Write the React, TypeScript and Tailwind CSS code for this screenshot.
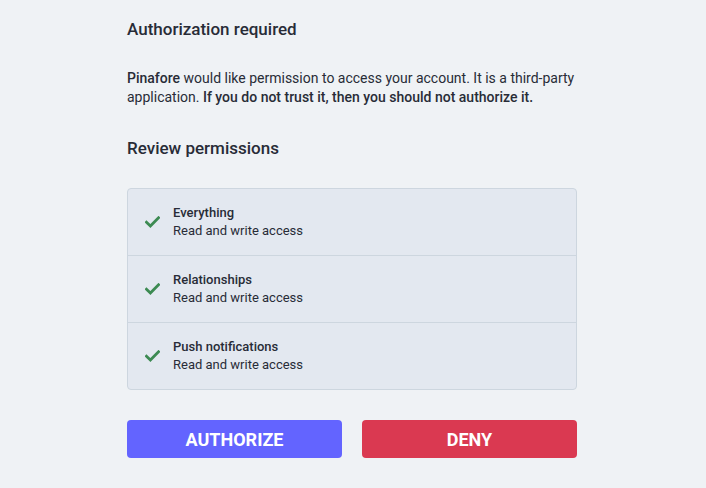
const permissions = [
  { title: 'Everything', desc: 'Read and write access' },
  { title: 'Relationships', desc: 'Read and write access' },
  { title: 'Push notifications', desc: 'Read and write access' },
];

function Check() {
  return (
    <svg width="15" height="12" viewBox="0 0 15 12" className="shrink-0">
      <path d="M1.5 6.3 L5.4 10 L13.5 1.8" fill="none" stroke="#3c8a52" strokeWidth="2.8" strokeLinecap="square" />
    </svg>
  );
}

export default function App() {
  return (
    <div className="min-h-[488px] bg-[#eff2f5] text-[#282c37]" style={{ fontFamily: 'Roboto, "Liberation Sans", sans-serif' }}>
      <div className="ml-[127px] w-[450px] pt-[19px]">
        <h2 className="text-[17px] leading-[20px] font-medium">Authorization required</h2>

        <p className="mt-[30px] text-[14px] leading-[19px]">
          <strong className="font-medium">Pinafore</strong> would like permission to access your account. It is a third-party
          application. <strong className="font-medium">If you do not trust it, then you should not authorize it.</strong>
        </p>

        <h3 className="mt-[31px] text-[17px] leading-[20px] font-medium">Review permissions</h3>

        <div className="mt-[30px] rounded-[4px] border border-[#cdd6df] bg-[#e3e8f0]">
          {permissions.map((p, i) => (
            <div
              key={p.title}
              className={`flex items-center pl-[17px] pt-[15px] pb-[15px] ${i > 0 ? 'border-t border-[#cdd6df]' : ''}`}
            >
              <Check />
              <div className="ml-[13px] text-[13px] leading-[18px]">
                <div className="font-medium">{p.title}</div>
                <div>{p.desc}</div>
              </div>
            </div>
          ))}
        </div>

        <div className="mt-[30px] flex gap-[20px]">
          <button className="h-[38px] flex-1 rounded-[4px] bg-[#6364ff] text-[18px] font-bold uppercase text-white">
            Authorize
          </button>
          <button className="h-[38px] flex-1 rounded-[4px] bg-[#da3951] text-[18px] font-bold uppercase text-white">
            Deny
          </button>
        </div>
      </div>
    </div>
  );
}
